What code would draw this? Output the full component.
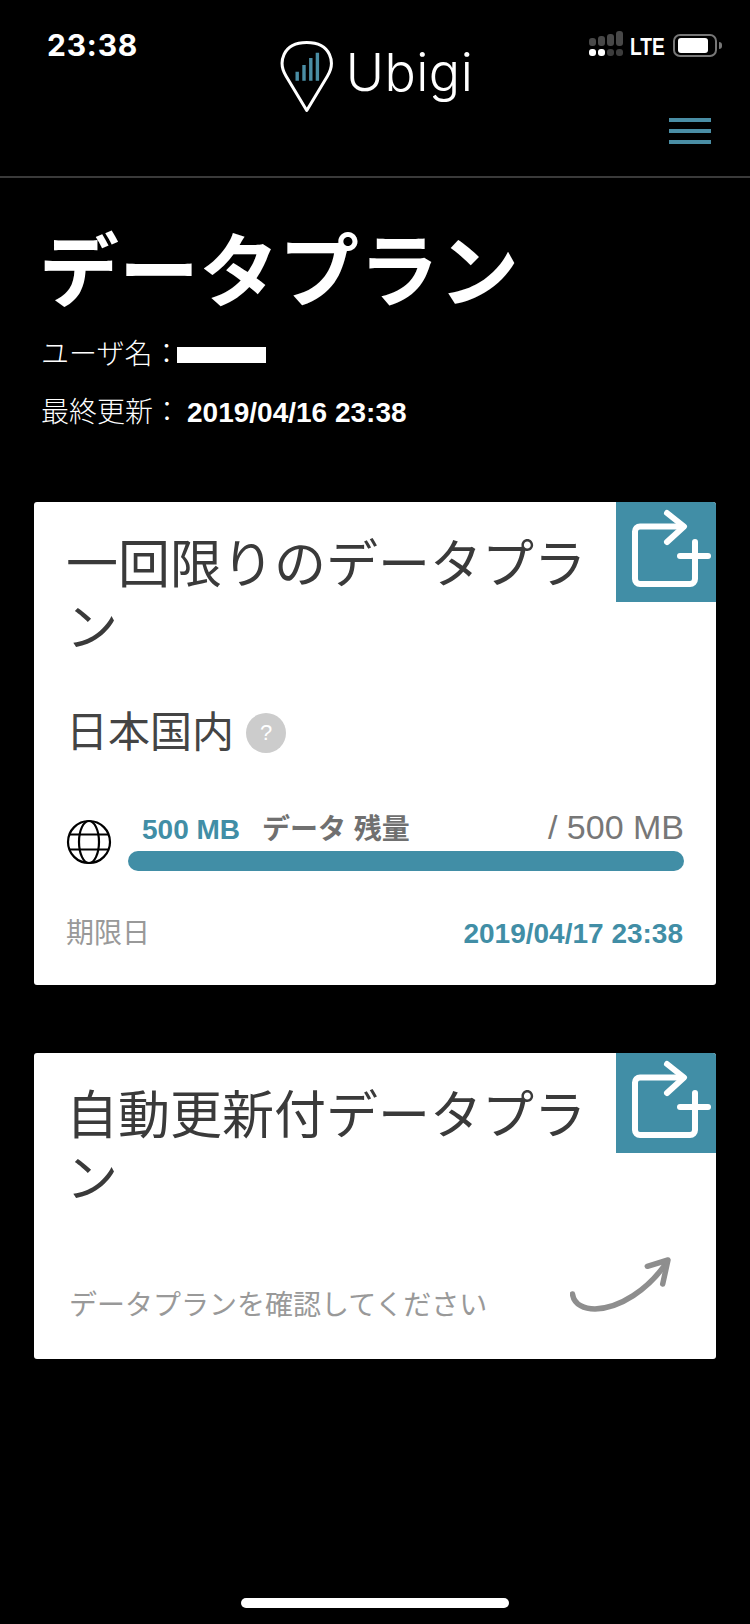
<script>
  const cards = [
    { title: '一回限りのデータプラン' },
    { title: '自動更新付データプラン' }
  ];
</script>

<div class="page">
  <header class="header">
    <div class="time">23:38</div>
    <div class="logo">
      <svg class="pin" width="58" height="76" viewBox="2 0 58 76" fill="none">
        <path d="M31.750 71.500 11 37C3 24 7 3.500 31.750 3.500 56.500 3.500 60.500 24 52.500 37Z" stroke="#fff" stroke-width="3" stroke-linejoin="round"/>
        <path d="M22.200 41.700V32.700M29 41.700V26M35.800 41.700V19M42.400 41.700V13.700" stroke="#4a8ea5" stroke-width="3.400"/>
      </svg>
      <span class="brand">Ubigi</span>
    </div>
    <div class="status">
      <div class="signal">
        <div class="col"><i class="bar b1"></i><i class="dot on"></i></div>
        <div class="col"><i class="bar b2"></i><i class="dot on"></i></div>
        <div class="col"><i class="bar b3"></i><i class="dot"></i></div>
        <div class="col"><i class="bar b4"></i><i class="dot"></i></div>
      </div>
      <span class="lte">LTE</span>
      <div class="battery"><div class="charge"></div></div>
      <div class="nub"></div>
    </div>
    <button class="menu" aria-label="menu"><i></i><i></i><i></i></button>
  </header>

  <section class="intro">
    <h1>データプラン</h1>
    <div class="meta user">ユーザ名：<span class="redact"></span></div>
    <div class="meta updated">最終更新：<b>2019/04/16 23:38</b></div>
  </section>

  <article class="card first">
    <div class="share">
      <svg width="100" height="100" viewBox="0 0 100 100" fill="none" stroke="#fff" stroke-width="6" stroke-linecap="round" stroke-linejoin="round">
        <path d="M66 24.500H24a5 5 0 0 0-5 5V77a5 5 0 0 0 5 5H74a5 5 0 0 0 5-5V40"/>
        <path d="M51 11 68 24.500 51 40"/>
        <path d="M64 54H92"/>
      </svg>
    </div>
    <h2>{cards[0].title}</h2>
    <div class="region">日本国内 <span class="help">?</span></div>
    <div class="usage">
      <svg class="globe" width="46" height="46" viewBox="0 0 46 46" fill="none" stroke="#000" stroke-width="2.200">
        <circle cx="23" cy="23" r="21"/>
        <ellipse cx="23" cy="23" rx="10" ry="21"/>
        <path d="M3.400 15.500H42.600M3.400 30.500H42.600"/>
      </svg>
      <div class="meter">
        <div class="labels">
          <b class="left">500 MB</b>
          <b class="what">データ 残量</b>
          <span class="total">/ 500 MB</span>
        </div>
        <div class="bar-track"></div>
      </div>
    </div>
    <div class="expiry">
      <span>期限日</span>
      <b>2019/04/17 23:38</b>
    </div>
  </article>

  <article class="card second">
    <div class="share">
      <svg width="100" height="100" viewBox="0 0 100 100" fill="none" stroke="#fff" stroke-width="6" stroke-linecap="round" stroke-linejoin="round">
        <path d="M66 24.500H24a5 5 0 0 0-5 5V77a5 5 0 0 0 5 5H74a5 5 0 0 0 5-5V40"/>
        <path d="M51 11 68 24.500 51 40"/>
        <path d="M64 54H92"/>
      </svg>
    </div>
    <h2>{cards[1].title}</h2>
    <div class="confirm">
      <span>データプランを確認してください</span>
      <svg width="106" height="56" viewBox="0 0 106 56" fill="none" stroke="#8e8e8e" stroke-width="5.500" stroke-linecap="round" stroke-linejoin="round">
        <path d="M2.500 38C4 49 15 53 25 53 50 52 78 34 97 6"/>
        <path d="M77.300 10.300 98 4 92.700 28"/>
      </svg>
    </div>
  </article>

  <div class="home"></div>
</div>

<style>
  :global(body) {
    margin: 0;
    background: #000;
  }
  .page {
    width: 750px;
    height: 1624px;
    background: #000;
    display: flex;
    flex-direction: column;
    font-family: "Liberation Sans", "Noto Sans CJK JP", sans-serif;
    color: #fff;
    overflow: hidden;
  }
  .header {
    height: 176px;
    border-bottom: 2px solid #3a3a3a;
    display: grid;
    grid-template-columns: 1fr auto 1fr;
    grid-template-rows: 100px 1fr;
  }
  .time {
    grid-column: 1;
    grid-row: 1;
    font-family: Inter, sans-serif;
    font-weight: 700;
    font-size: 30px;
    line-height: 36px;
    letter-spacing: 0.800px;
    padding: 27px 0 0 47px;
  }
  .logo {
    grid-column: 2;
    grid-row: 1 / 3;
    display: flex;
    align-items: flex-start;
    padding-top: 39px;
  }
  .pin { display: block; }
  .brand {
    font-family: Inter, sans-serif;
    font-weight: 300;
    font-size: 52px;
    line-height: 68px;
    margin-left: 11px;
    letter-spacing: 0.500px;
  }
  .status {
    grid-column: 3;
    grid-row: 1;
    display: flex;
    align-items: flex-start;
    justify-content: flex-end;
    padding: 31px 28px 0 0;
  }
  .signal {
    display: flex;
    gap: 2px;
    margin-right: 7px;
  }
  .col {
    width: 7px;
    height: 25px;
    display: flex;
    flex-direction: column;
    justify-content: flex-end;
    gap: 3px;
  }
  .bar {
    display: block;
    background: #484848;
    border-radius: 3px;
  }
  .b1 { height: 8px; }
  .b2 { height: 10px; }
  .b3 { height: 12px; }
  .b4 { height: 15px; }
  .dot {
    display: block;
    height: 7px;
    border-radius: 3px;
    background: #3c3c3c;
  }
  .dot.on { background: #fff; }
  .lte {
    font-family: "Liberation Sans", sans-serif;
    font-weight: 700;
    font-size: 24px;
    line-height: 24px;
    margin-top: 4px;
    margin-right: -1px;
    transform: scaleX(0.8);
    transform-origin: left center;
  }
  .battery {
    width: 44px;
    height: 23px;
    margin-top: 3px;
    box-sizing: border-box;
    border: 2px solid #777;
    border-radius: 7px;
    padding: 2px 3px;
  }
  .charge {
    width: 30px;
    height: 15px;
    background: #fff;
    border-radius: 3px;
  }
  .nub {
    width: 3px;
    height: 7px;
    margin-top: 11px;
    margin-left: 2px;
    background: #777;
    border-radius: 0 3px 3px 0;
  }
  .menu {
    grid-column: 3;
    grid-row: 2;
    justify-self: end;
    background: none;
    border: 0;
    padding: 18px 39px 0 0;
    margin: 0;
    width: 81px;
    height: 50px;
    display: flex;
    flex-direction: column;
    gap: 7px;
    box-sizing: border-box;
  }
  .menu i {
    display: block;
    height: 4px;
    width: 42px;
    background: #4a8ea5;
  }
  .intro {
    padding: 45px 41px 0;
    font-weight: 300;
  }
  h1 {
    margin: 0 0 0 -2px;
    font-size: 80px;
    line-height: 100px;
    font-weight: 700;
  }
  .meta {
    font-size: 28px;
    line-height: 40px;
  }
  .user { margin-top: 12px; display: flex; align-items: center; }
  .updated { margin-top: 18px; }
  .updated b { margin-left: 6px; font-weight: 700; }
  .redact {
    display: inline-block;
    width: 89px;
    height: 16px;
    background: #fff;
    margin-left: -3px;
  }
  .card {
    margin: 0 34px;
    background: #fff;
    border-radius: 3px;
    position: relative;
    color: #333;
    box-sizing: border-box;
    padding: 32px 32px 0;
  }
  .first {
    margin-top: 69px;
    height: 483px;
  }
  .second {
    margin-top: 68px;
    height: 306px;
  }
  .share {
    position: absolute;
    right: 0;
    top: 0;
    width: 100px;
    height: 100px;
    background: #418ea6;
    border-radius: 0 3px 0 0;
  }
  .share svg { display: block; }
  h2 {
    margin: 0;
    padding-right: 96px;
    font-size: 52px;
    line-height: 63px;
    font-weight: 400;
    color: #3a3a3a;
  }
  .region {
    margin-top: 43px;
    font-size: 42px;
    line-height: 60px;
    font-weight: 400;
    color: #444;
    display: flex;
    align-items: center;
    gap: 12px;
  }
  .help {
    width: 40px;
    height: 40px;
    border-radius: 50%;
    background: #ccc;
    color: #fff;
    font-size: 22px;
    line-height: 40px;
    text-align: center;
    font-weight: 400;
  }
  .usage {
    display: flex;
    align-items: flex-end;
    margin-top: 44px;
  }
  .globe {
    display: block;
    margin-bottom: 6px;
  }
  .meter {
    margin-left: 16px;
    flex: 1;
  }
  .labels {
    display: flex;
    align-items: baseline;
    padding-left: 14px;
    height: 44px;
  }
  .left {
    font-size: 28px;
    color: #418ea6;
  }
  .what {
    font-size: 28px;
    color: #707070;
    margin-left: 22px;
  }
  .total {
    margin-left: auto;
    font-size: 34px;
    color: #777;
  }
  .bar-track {
    height: 20px;
    border-radius: 10px;
    background: #418ea6;
  }
  .expiry {
    display: flex;
    justify-content: space-between;
    align-items: center;
    margin-top: 43px;
    padding-right: 1px;
    font-size: 28px;
    line-height: 40px;
    color: #999;
  }
  .expiry b { color: #418ea6; }
  .confirm {
    display: flex;
    justify-content: space-between;
    align-items: center;
    margin-top: 33px;
    padding-left: 3px;
    padding-right: 8px;
    font-size: 28px;
    color: #999;
  }
  .confirm span { padding-top: 39px; }
  .home {
    width: 268px;
    height: 10px;
    border-radius: 5px;
    background: #fff;
    margin: auto auto 16px;
  }
</style>
